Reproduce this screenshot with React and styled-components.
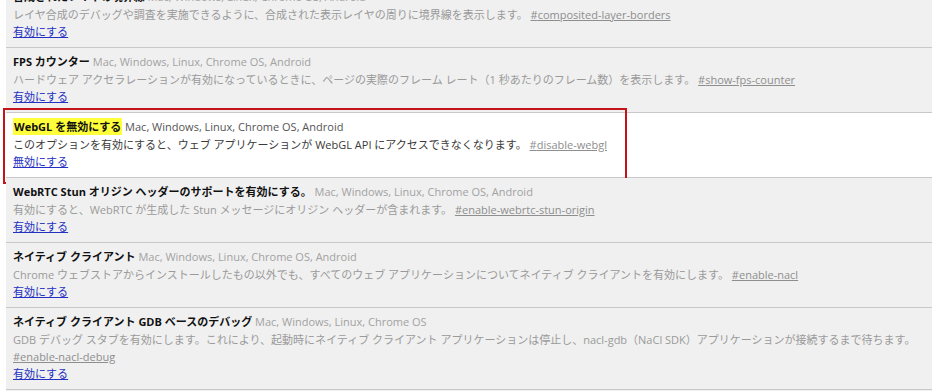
import React from "react";
import styled, { createGlobalStyle } from "styled-components";

const GlobalStyle = createGlobalStyle`
  html, body {
    margin: 0;
    padding: 0;
    background: #ffffff;
    overflow: hidden;
  }
  body {
    font-family: "Open Sans", "Noto Sans CJK JP", sans-serif;
    font-size: 11px;
  }
`;

const PLATFORMS = "Mac, Windows, Linux, Chrome OS, Android";

const experiments = [
  {
    name: "合成されたレイヤの境界線",
    platforms: PLATFORMS,
    desc: "レイヤ合成のデバッグや調査を実施できるように、合成された表示レイヤの周りに境界線を表示します。",
    hash: "composited-layer-borders",
    action: "有効にする",
  },
  {
    name: "FPS カウンター",
    platforms: PLATFORMS,
    desc: "ハードウェア アクセラレーションが有効になっているときに、ページの実際のフレーム レート（1 秒あたりのフレーム数）を表示します。",
    hash: "show-fps-counter",
    action: "有効にする",
  },
  {
    name: "WebGL を無効にする",
    platforms: PLATFORMS,
    desc: "このオプションを有効にすると、ウェブ アプリケーションが WebGL API にアクセスできなくなります。",
    hash: "disable-webgl",
    action: "無効にする",
    active: true,
  },
  {
    name: "WebRTC Stun オリジン ヘッダーのサポートを有効にする。",
    platforms: PLATFORMS,
    desc: "有効にすると、WebRTC が生成した Stun メッセージにオリジン ヘッダーが含まれます。",
    hash: "enable-webrtc-stun-origin",
    action: "有効にする",
  },
  {
    name: "ネイティブ クライアント",
    platforms: PLATFORMS,
    desc: "Chrome ウェブストアからインストールしたもの以外でも、すべてのウェブ アプリケーションについてネイティブ クライアントを有効にします。",
    hash: "enable-nacl",
    action: "有効にする",
  },
  {
    name: "ネイティブ クライアント GDB ベースのデバッグ",
    platforms: "Mac, Windows, Linux, Chrome OS",
    desc: "GDB デバッグ スタブを有効にします。これにより、起動時にネイティブ クライアント アプリケーションは停止し、nacl-gdb（NaCl SDK）アプリケーションが接続するまで待ちます。",
    hash: "enable-nacl-debug",
    action: "有効にする",
  },
  {
    name: "ネイティブ クライアント GDB デバッグ パターン",
    platforms: PLATFORMS,
    desc: "指定したパターンと一致するマニフェスト URL を持つアプリケーションのみデバッグします。",
    hash: "nacl-debug-mask",
    action: "有効にする",
  },
];

export default function App() {
  return (
    <>
      <GlobalStyle />
      <List>
        {experiments.map((e) => (
          <Row key={e.hash} $active={e.active}>
            <Heading>
              <Title $highlight={e.active}>{e.name}</Title>{" "}
              <Platforms $active={e.active}>{e.platforms}</Platforms>
            </Heading>
            <Desc $active={e.active}>
              {e.desc} <Hash href={"#" + e.hash}>#{e.hash}</Hash>
            </Desc>
            <Action href="#">{e.action}</Action>
            {e.active && <Marker />}
          </Row>
        ))}
      </List>
    </>
  );
}

const List = styled.div`
  display: flex;
  flex-direction: column;
  margin: -17px 1px 0 6px;
`;

const Row = styled.div`
  position: relative;
  background: ${(p) => (p.$active ? "#ffffff" : "#f0f0f0")};
  border-bottom: 1px solid #c9c9c9;
  padding: 5px 14px 7px 7px;
`;

const Heading = styled.div`
  line-height: 18px;
  white-space: nowrap;
`;

const Title = styled.span`
  font-weight: 700;
  color: #111;
  background: ${(p) => (p.$highlight ? "#ffff3a" : "transparent")};
  padding: ${(p) => (p.$highlight ? "1px 1px" : "0")};
`;

const Platforms = styled.span`
  color: ${(p) => (p.$active ? "#555" : "#a2a2a2")};
`;

const Desc = styled.div`
  line-height: 17px;
  color: ${(p) => (p.$active ? "#3a3a3a" : "#9a9a9a")};
`;

const Hash = styled.a`
  color: #8e8e8e;
  text-decoration: underline;
  white-space: nowrap;
`;

const Action = styled.a`
  display: block;
  width: fit-content;
  line-height: 17px;
  color: #2430c2;
  text-decoration: underline;
`;

const Marker = styled.div`
  position: absolute;
  left: -3px;
  top: -5px;
  width: 620px;
  height: 72px;
  border: 2px solid #c4141b;
  pointer-events: none;
`;
